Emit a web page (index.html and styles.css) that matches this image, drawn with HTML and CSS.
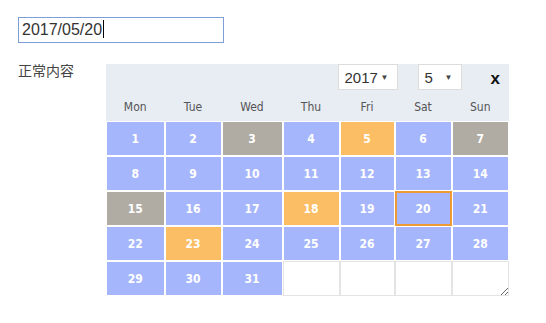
FILE: index.html
```html
<!DOCTYPE html>
<html>
<head>
    <meta charset="utf-8">
    <title>Date Picker</title>
    <link rel="stylesheet" href="styles.css">
</head>
<body>
    <div class="page">
        <div class="field">
            <div class="date-input">2017/05/20<span class="caret"></span></div>

            <div class="calendar">
                <div class="cal-bar">
                    <div class="select year">2017<span class="arrow">&#9660;</span></div>
                    <div class="select month">5<span class="arrow">&#9660;</span></div>
                    <span class="close">x</span>
                </div>
                <div class="cal-grid">
                    <div class="day-name">Mon</div>
                    <div class="day-name">Tue</div>
                    <div class="day-name">Wed</div>
                    <div class="day-name">Thu</div>
                    <div class="day-name">Fri</div>
                    <div class="day-name">Sat</div>
                    <div class="day-name">Sun</div>

                    <div class="day">1</div>
                    <div class="day">2</div>
                    <div class="day off">3</div>
                    <div class="day">4</div>
                    <div class="day mark">5</div>
                    <div class="day">6</div>
                    <div class="day off">7</div>

                    <div class="day">8</div>
                    <div class="day">9</div>
                    <div class="day">10</div>
                    <div class="day">11</div>
                    <div class="day">12</div>
                    <div class="day">13</div>
                    <div class="day">14</div>

                    <div class="day off">15</div>
                    <div class="day">16</div>
                    <div class="day">17</div>
                    <div class="day mark">18</div>
                    <div class="day">19</div>
                    <div class="day current">20</div>
                    <div class="day">21</div>

                    <div class="day">22</div>
                    <div class="day mark">23</div>
                    <div class="day">24</div>
                    <div class="day">25</div>
                    <div class="day">26</div>
                    <div class="day">27</div>
                    <div class="day">28</div>

                    <div class="day">29</div>
                    <div class="day">30</div>
                    <div class="day">31</div>
                    <div class="day empty"></div>
                    <div class="day empty"></div>
                    <div class="day empty"></div>
                    <div class="day empty"></div>
                </div>
            </div>
        </div>

        <p class="note">正常内容</p>
    </div>
</body>
</html>
```

FILE: styles.css
```css
html, body {
    height: 100%;
}

body {
    margin: 0;
    font-family: "Liberation Sans", Arial, "Noto Sans CJK SC", sans-serif;
    color: #333;
    background: #fff;
}

.page {
    box-sizing: border-box;
    min-height: 100%;
    padding: 17px 18px;
}

.field {
    position: relative;
}

.date-input {
    box-sizing: border-box;
    width: 206px;
    height: 26px;
    padding: 0 3px;
    border: 1px solid #7d9fd5;
    font-size: 16px;
    line-height: 24px;
    color: #333;
}

.caret {
    display: inline-block;
    width: 1px;
    height: 18px;
    margin-left: 1px;
    vertical-align: -3px;
    background: #000;
}

.note {
    margin: 17px 0 0;
    font-family: "Noto Sans CJK SC", sans-serif;
    font-size: 14px;
    line-height: 20px;
    color: #444;
}

/* popup calendar */
.calendar {
    position: absolute;
    top: 47px;
    left: 88px;
    z-index: 5;
    width: 403px;
    height: 232px;
    background: #e8ecf3;
    resize: both;
    overflow: hidden;
}

.cal-bar {
    display: flex;
    align-items: flex-start;
    justify-content: flex-end;
    height: 27px;
    padding-right: 9px;
}

.select {
    box-sizing: border-box;
    display: flex;
    align-items: center;
    justify-content: space-between;
    height: 26px;
    padding: 0 8px 0 6px;
    background: #fff;
    border: 1px solid #dcdcdc;
    font-size: 15px;
    color: #333;
}

.year {
    width: 60px;
}

.month {
    width: 44px;
    margin-left: 20px;
}

.arrow {
    font-size: 8px;
    color: #444;
}

.close {
    margin-left: 29px;
    font-size: 17px;
    font-weight: bold;
    line-height: 29px;
    color: #111;
}

.cal-grid {
    display: grid;
    grid-template-columns: 58.5fr 57fr 61fr 57fr 55fr 57fr 57.5fr;
    grid-template-rows: 30px repeat(5, 35px);
    background: #fff;
    font-family: "DejaVu Sans Condensed", "DejaVu Sans", sans-serif;
    font-stretch: condensed;
}

.day-name {
    display: flex;
    align-items: center;
    justify-content: center;
    padding-top: 1px;
    background: #e8ecf3;
    font-size: 12px;
    color: #555;
}

.day {
    box-sizing: border-box;
    display: flex;
    align-items: center;
    justify-content: center;
    border: 1px solid #fff;
    background: #a6b6fc;
    font-size: 12px;
    font-weight: bold;
    color: #fff;
}

.day.off {
    background: #b0aca4;
}

.day.mark {
    background: #fcbe64;
}

.day.current {
    border: 2px solid #ee9a34;
}

.day.empty {
    background: #fff;
    border-color: #e4e4e4;
}
```
